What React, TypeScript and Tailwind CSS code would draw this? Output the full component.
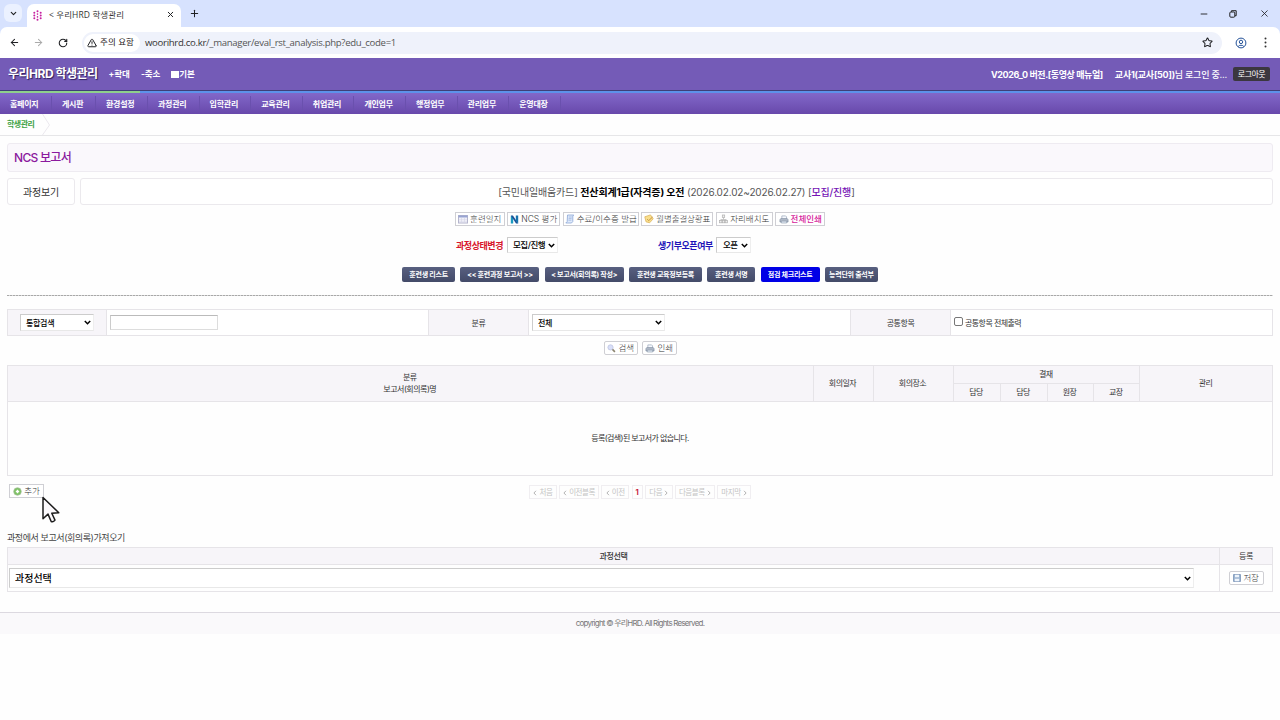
import type { ReactNode } from "react";
import { ArrowLeft, ArrowRight, ChevronDown, Minus, Plus, RotateCw, Star, TriangleAlert, X } from "lucide-react";
import clsx from "clsx";

const menus = [
  { label: "홈페이지", width: "w-[52px]" },
  { label: "게시판", width: "w-[44px]" },
  { label: "환경설정", width: "w-[52px]" },
  { label: "과정관리", width: "w-[51.6px]" },
  { label: "입학관리", width: "w-[51.6px]" },
  { label: "교육관리", width: "w-[51.6px]" },
  { label: "취업관리", width: "w-[51.6px]" },
  { label: "개인업무", width: "w-[51.6px]" },
  { label: "행정업무", width: "w-[51.6px]" },
  { label: "관리업무", width: "w-[51.6px]" },
  { label: "운영대장", width: "w-[51.6px]" },
];

const actions = [
  { label: "훈련생 리스트", width: "w-[53px]" },
  { label: "<< 훈련과정 보고서 >>", width: "w-[79px]" },
  { label: "< 보고서(회의록) 작성>", width: "w-[79px]" },
  { label: "훈련생 교육정보등록", width: "w-[73px]" },
  { label: "훈련생 서명", width: "w-[48px]" },
  { label: "점검 체크리스트", width: "w-[59px]", active: true },
  { label: "능력단위 출석부", width: "w-[53px]" },
];

const pages = [
  { label: "처음", width: "w-[28px]", dir: "prev" },
  { label: "이전블록", width: "w-[40px]", dir: "prev" },
  { label: "이전", width: "w-[28px]", dir: "prev" },
  { label: "1", width: "w-[11px]" },
  { label: "다음", width: "w-[28px]", dir: "next" },
  { label: "다음블록", width: "w-[40px]", dir: "next" },
  { label: "마지막", width: "w-[34px]", dir: "next" },
];

function CalendarIcon() {
  return (
    <svg width="10" height="10" viewBox="0 0 10 10" className="shrink-0">
      <rect x=".5" y="1.5" width="9" height="7.5" fill="#f4f4fb" stroke="#b4b4cc" />
      <path d="M.5 1.5h9v2h-9z" fill="#98a4d2" />
      <path d="M1 5.3h8M1 7.2h8M3.5 4v5M6.5 4v5" stroke="#d3d3e6" strokeWidth=".6" />
    </svg>
  );
}

function NcsIcon() {
  return (
    <svg width="9" height="9" viewBox="0 0 9 9" className="shrink-0">
      <path d="M.8 8.5V.8l2.4 1v6.7z" fill="#1a9ac0" />
      <path d="M.8.5h2.1l5.3 8H6z" fill="#1d4f96" />
      <path d="M5.8.5h2.4v8L5.8 6z" fill="#1672ad" />
    </svg>
  );
}

function ScrollIcon() {
  return (
    <svg width="10" height="10" viewBox="0 0 10 10" className="shrink-0">
      <path d="M2.5 1h6.3l-1 1v5.5L6.5 9H.8l1.4-1.5z" fill="#dfeafb" stroke="#8aa6d6" strokeWidth=".8" />
      <path d="M3.8 3h3M3.6 4.6h3M3.4 6.2h3" stroke="#8aa6d6" strokeWidth=".6" />
    </svg>
  );
}

function NoteIcon() {
  return (
    <svg width="10" height="10" viewBox="0 0 10 10" className="shrink-0">
      <path d="M.8 2.8 6.5.9l2.7 3.9-3.6 4-3.6-1z" fill="#f9df8c" stroke="#dcb45e" strokeWidth=".8" />
      <path d="m3.2 5.2 1.5 1.4L8.6 3" fill="none" stroke="#c08c40" strokeWidth=".9" />
    </svg>
  );
}

function SeatIcon() {
  return (
    <svg width="9" height="10" viewBox="0 0 9 10" className="shrink-0">
      <path d="M4.5 3.5v2M1.8 7V5.5h5.4V7" fill="none" stroke="#bbb" strokeWidth=".8" />
      <g fill="#eee" stroke="#b0b0b0" strokeWidth=".7">
        <rect x="3.3" y="1" width="2.4" height="2.6" />
        <rect x=".6" y="6.5" width="2.3" height="2.3" />
        <rect x="3.4" y="6.5" width="2.3" height="2.3" />
        <rect x="6.2" y="6.5" width="2.3" height="2.3" />
      </g>
    </svg>
  );
}

function PrinterIcon() {
  return (
    <svg width="10" height="9" viewBox="0 0 10 10" className="shrink-0">
      <path d="M2.6 4V1h4.2l1 1v2" fill="#f5f8fd" stroke="#8f9db2" strokeWidth=".7" />
      <path d="M1.4 4h7.2l.9 1.2v2.6H.5V5.2z" fill="#b1bac8" stroke="#7b899d" strokeWidth=".7" />
      <path d="M2 6.8h6v2.1H2z" fill="#e6eef9" stroke="#7b899d" strokeWidth=".6" />
    </svg>
  );
}

function SearchIcon() {
  return (
    <svg width="9" height="9" viewBox="0 0 9 9" className="shrink-0">
      <circle cx="3.5" cy="3.4" r="2.6" fill="#d9dff8" stroke="#c3c8e4" strokeWidth=".9" />
      <path d="m5.5 5.4 2.4 2.5" stroke="#8c8570" strokeWidth="1.6" />
    </svg>
  );
}

function AddIcon() {
  return (
    <svg width="9" height="9" viewBox="0 0 9 9" className="shrink-0">
      <circle cx="4.5" cy="4.5" r="3.8" fill="#7cc162" stroke="#a7bf9e" strokeWidth=".7" />
      <path d="M4.5 2.8v3.4M2.8 4.5h3.4" stroke="#fff" strokeWidth="1.4" />
    </svg>
  );
}

function SaveIcon() {
  return (
    <svg width="8" height="8" viewBox="0 0 8 8" className="shrink-0">
      <rect x=".6" y=".6" width="6.8" height="6.8" fill="#9db5d2" stroke="#7792b6" strokeWidth=".8" />
      <path d="M2 .8h4v2.4H2zM1.8 4.8h4.4v2.4H1.8z" fill="#eef4fb" />
    </svg>
  );
}

function IconButton({ icon, className, children }: { icon: ReactNode; className: string; children: ReactNode }) {
  return (
    <button
      className={clsx(
        "flex h-[14px] items-center justify-center gap-[2px] whitespace-nowrap border border-[#cfcfd4] bg-white text-[8.5px] leading-none font-light text-[#333]",
        className,
      )}
    >
      {icon}
      <span>{children}</span>
    </button>
  );
}

function SelectBox({ className, children }: { className: string; children: ReactNode }) {
  return (
    <div
      className={clsx(
        "flex items-center justify-between border border-t-[#ccc] border-r-[#eee] border-b-[#e8e8e8] border-l-[#ccc] bg-white leading-none whitespace-nowrap text-black",
        className,
      )}
    >
      <span>{children}</span>
      <svg width="7" height="5" viewBox="0 0 7 5" className="shrink-0">
        <path d="m.8 1 2.7 2.7L6.2 1" fill="none" stroke="#000" strokeWidth="1.5" />
      </svg>
    </div>
  );
}

function BrowserBar() {
  return (
    <div className="h-[58px] bg-[#d7e2fe] font-['Open_Sans','Noto_Sans_CJK_KR',sans-serif] text-[#1f2023]">
      <div className="flex h-[27px] items-end">
        <div className="mb-[5px] ml-1 flex h-[18px] w-[18px] items-center justify-center rounded-md bg-[#ebf1ff]">
          <ChevronDown size={9} strokeWidth={3} />
        </div>
        <div className="ml-[5px] flex h-[23px] w-[154px] items-center rounded-t-[7px] bg-white pl-[6px]">
          <svg width="9" height="11" viewBox="0 0 9 11" fill="#c61fa0">
            <circle cx="4.5" cy="1.3" r="1" />
            <circle cx="4.5" cy="9.7" r="1" />
            <circle cx="1.3" cy="2.7" r="1" />
            <circle cx="7.7" cy="2.7" r="1" />
            <circle cx="1.3" cy="5.5" r="1" />
            <circle cx="7.7" cy="5.5" r="1" />
            <circle cx="1.3" cy="8.3" r="1" />
            <circle cx="7.7" cy="8.3" r="1" />
            <circle cx="4.5" cy="4.1" r=".8" />
            <circle cx="4.5" cy="6.9" r=".8" />
          </svg>
          <span className="ml-[7px] text-[8.5px] leading-none tracking-[0.1px] whitespace-nowrap text-[#333]">&lt; 우리HRD 학생관리</span>
          <X size={9} strokeWidth={2.6} className="mr-[6px] mb-[3px] ml-auto" />
        </div>
        <Plus size={11} strokeWidth={2.2} className="mb-[8px] ml-[8px]" />
        <div className="mb-[8px] ml-auto flex items-center">
          <Minus size={10} strokeWidth={2.2} className="mr-[20px]" />
          <svg width="8" height="8" viewBox="0 0 8 8" fill="none" stroke="#222" className="mr-[22px]">
            <rect x=".8" y="2" width="5" height="5.2" rx="1" />
            <path d="M2.5 1.8V.7h4.7v5H6" />
          </svg>
          <X size={11} strokeWidth={1.8} className="mr-[10px]" />
        </div>
      </div>
      <div className="flex h-[31px] items-center rounded-t-[7px] bg-white">
        <ArrowLeft size={11} strokeWidth={2.2} className="ml-[9px]" />
        <ArrowRight size={11} strokeWidth={2.2} className="ml-[13px] text-[#aaa]" />
        <RotateCw size={10} strokeWidth={2.6} className="ml-[14px]" />
        <div className="ml-[14px] flex h-[22px] w-[1140px] items-center rounded-full bg-[#eff2fb] pr-[9px] pl-[2px]">
          <div className="flex h-[18px] w-[56px] items-center gap-[3px] rounded-full bg-white pl-[3px] text-[8.5px] leading-none tracking-[0.1px] whitespace-nowrap">
            <TriangleAlert size={10} strokeWidth={2.4} />
            주의 요함
          </div>
          <span className="ml-[5px] text-[9.6px] leading-none tracking-[-0.31px] whitespace-nowrap text-[#333]">
            woorihrd.co.kr<span className="text-[#555]">/_manager/eval_rst_analysis.php?edu_code=1</span>
          </span>
          <Star size={11} strokeWidth={2.2} className="ml-auto" />
        </div>
        <svg width="12" height="12" viewBox="0 0 12 12" fill="none" stroke="#245299" className="ml-[13px]">
          <circle cx="6" cy="6" r="4.9" />
          <circle cx="6" cy="4.9" r="1.7" />
          <path d="M3.2 9.5C4 7.8 8 7.8 8.8 9.5" />
        </svg>
        <svg width="3" height="11" viewBox="0 0 3 11" fill="#333" className="ml-[17px]">
          <circle cx="1.5" cy="1.5" r="1" />
          <circle cx="1.5" cy="5.5" r="1" />
          <circle cx="1.5" cy="9.5" r="1" />
        </svg>
      </div>
    </div>
  );
}

function Header() {
  return (
    <header className="text-white">
      <div className="flex h-[32px] items-center bg-[#6f56b5] bg-[radial-gradient(rgba(255,255,255,0.1)_0.5px,transparent_0.8px)] bg-[size:2px_2px] pr-[10px] pl-2 whitespace-nowrap">
        <h1 className="text-[12px] leading-none font-bold tracking-[-0.5px] [text-shadow:1px_1px_1px_#30205c]">우리HRD 학생관리</h1>
        <div className="ml-[11px] flex gap-[11px] text-[8.5px] leading-none font-bold tracking-[-0.05px]">
          <span>+확대</span>
          <span>-축소</span>
          <span className="flex items-center">
            <i className="h-[7px] w-[8px] bg-white" />
            기본
          </span>
        </div>
        <div className="ml-auto flex items-center text-[9px] leading-none tracking-[-0.4px]">
          <b>V2026_0 버전.[동영상 매뉴얼]</b>
          <span className="ml-[12px] font-medium tracking-[-0.22px]">
            <b>교사1(교사[50])</b>님 로그인 중...
          </span>
          <button className="ml-[6px] h-[14px] w-[37px] rounded-[2px] bg-[#3b373f] text-[8px] leading-none tracking-[-0.5px]">로그아웃</button>
        </div>
      </div>
      <div className="h-px bg-[#3f3f78]" />
      <div className="flex h-[2px] bg-[#5d92ea]">
        <div className="w-[140px] bg-[#8fd08c]" />
      </div>
      <nav className="flex h-[21px] items-center bg-gradient-to-b from-[#8268c9] to-[#6848ab]">
        {menus.map((menu) => (
          <span
            key={menu.label}
            className={clsx(
              "flex h-[15px] shrink-0 items-center justify-start border-r border-[#6a50ae] pl-[10px] text-[8px] leading-none font-bold tracking-[-0.25px] whitespace-nowrap",
              menu.width,
            )}
          >
            {menu.label}
          </span>
        ))}
      </nav>
    </header>
  );
}

function CourseTools() {
  return (
    <>
      <div className="mt-[7px] flex justify-center gap-[2.5px]">
        <IconButton icon={<CalendarIcon />} className="w-[50px]">훈련일지</IconButton>
        <IconButton icon={<NcsIcon />} className="w-[53px]">NCS 평가</IconButton>
        <IconButton icon={<ScrollIcon />} className="w-[76px]">수료/이수증 발급</IconButton>
        <IconButton icon={<NoteIcon />} className="w-[72px] tracking-[-0.1px]">월별출결상황표</IconButton>
        <IconButton icon={<SeatIcon />} className="w-[57px]">자리배치도</IconButton>
        <IconButton icon={<PrinterIcon />} className="w-[50px]">
          <span className="font-medium text-[#d6249c]">전체인쇄</span>
        </IconButton>
      </div>
      <div className="mt-[11px] flex h-4 items-center pl-[449px] text-[9px] leading-none font-bold tracking-[-0.45px]">
        <span className="w-[51px] whitespace-nowrap text-[#d8152b]">과정상태변경</span>
        <SelectBox className="h-4 w-[51px] pr-[2px] pl-[5px] text-[8.5px] font-medium">모집/진행</SelectBox>
        <span className="ml-[100px] w-[58px] whitespace-nowrap text-[#1d12b8]">생기부오픈여부</span>
        <SelectBox className="h-4 w-[35px] pr-[2px] pl-[6px] text-[8.5px] font-medium">오픈</SelectBox>
      </div>
      <div className="mt-[14px] flex justify-center gap-[5.3px]">
        {actions.map((action) => (
          <button
            key={action.label}
            className={clsx(
              "h-[15px] rounded-[2px] text-[7px] leading-none font-bold tracking-[-0.25px] whitespace-nowrap text-white",
              action.width,
              action.active ? "bg-[#0000e6]" : "bg-gradient-to-b from-[#586080] to-[#434a68]",
            )}
          >
            {action.label}
          </button>
        ))}
      </div>
    </>
  );
}

function SearchForm() {
  return (
    <>
      <div className="mt-[13px] flex h-[27px] border border-[#e6e4e8] bg-white text-[8px] leading-none tracking-[-0.45px]">
        <div className="flex w-[99px] items-center border-r border-[#e6e4e8] bg-[#f7f5f9] pl-3">
          <SelectBox className="h-[17px] w-[74px] pr-[2px] pl-[5px] font-medium tracking-[-0.3px]">통합검색</SelectBox>
        </div>
        <div className="flex w-[321px] items-center pl-[3px]">
          <input className="h-[15px] w-[108px] border border-[#ddd] border-t-[#bbb] border-l-[#ccc]" />
        </div>
        <div className="flex w-[101px] items-center justify-center border-x border-[#e6e4e8] bg-[#f7f5f9]">분류</div>
        <div className="flex w-[321px] items-center pl-[3px]">
          <SelectBox className="h-[17px] w-[133px] pr-[2px] pl-[5px] font-medium">전체</SelectBox>
        </div>
        <div className="flex w-[101px] items-center justify-center border-x border-[#e6e4e8] bg-[#f7f5f9]">공통항목</div>
        <label className="flex items-center gap-[2px] pl-[3px] tracking-[-0.55px]">
          <i className="mb-[2px] h-[9px] w-[9px] rounded-[2px] border border-[#777] bg-white" />
          공통항목 전체출력
        </label>
      </div>
      <div className="mt-[5px] flex justify-center gap-[4px]">
        <IconButton icon={<SearchIcon />} className="w-[34.5px] rounded-[2px]">검색</IconButton>
        <IconButton icon={<PrinterIcon />} className="w-[34.5px] rounded-[2px]">인쇄</IconButton>
      </div>
    </>
  );
}

function ReportTable() {
  return (
    <table className="mt-[10px] w-full table-fixed border-collapse text-center text-[8px] leading-[12px] tracking-[-0.5px] [&_td]:border [&_td]:border-[#e6e4e8] [&_td]:p-0 [&_td]:pb-[2px] [&_th]:border [&_th]:border-[#e6e4e8] [&_th]:p-0 [&_th]:pr-px [&_th]:pb-[2px] [&_th]:font-normal">
      <colgroup>
        <col className="w-[805.5px]" />
        <col className="w-[60px]" />
        <col className="w-[80px]" />
        <col className="w-[47px]" />
        <col className="w-[47px]" />
        <col className="w-[46px]" />
        <col className="w-[46.5px]" />
        <col />
      </colgroup>
      <thead className="bg-[#f7f5f9]">
        <tr className="h-[18px]">
          <th rowSpan={2}>
            분류
            <br />
            보고서(회의록)명
          </th>
          <th rowSpan={2}>회의일자</th>
          <th rowSpan={2}>회의장소</th>
          <th colSpan={4}>결재</th>
          <th rowSpan={2}>관리</th>
        </tr>
        <tr className="h-[18px]">
          <th>담당</th>
          <th>담당</th>
          <th>원장</th>
          <th>교장</th>
        </tr>
      </thead>
      <tbody>
        <tr className="h-[74px]">
          <td colSpan={8} className="tracking-[-0.6px]">등록(검색)된 보고서가 없습니다.</td>
        </tr>
      </tbody>
    </table>
  );
}

function Pagination() {
  return (
    <div className="mr-[2px] flex h-[16px] items-center gap-[2.2px] text-[7.5px] leading-none tracking-[-0.4px] text-[#c4c4c4]">
      {pages.map((page) => (
        <span
          key={page.label}
          className={clsx(
            "flex h-[14px] items-center justify-center gap-[2px] border border-[#f0eef1] pt-px whitespace-nowrap",
            page.width,
            !page.dir && "font-bold text-[#c8203c]",
          )}
        >
          {page.dir === "prev" && <Chevron d="M3 .8.9 3 3 5.2" />}
          {page.label}
          {page.dir === "next" && <Chevron d="M1 .8 3.1 3 1 5.2" />}
        </span>
      ))}
    </div>
  );
}

function Chevron({ d }: { d: string }) {
  return (
    <svg width="4" height="6" viewBox="0 0 4 6" fill="none" stroke="#aaa" strokeWidth=".9">
      <path d={d} />
    </svg>
  );
}

function CourseImport() {
  return (
    <>
      <p className="mt-[34px] h-[15px] text-[9px] leading-[12px] tracking-[-0.42px] text-[#444]">과정에서 보고서(회의록)가져오기</p>
      <div className="grid h-[45px] grid-cols-[1212px_1fr] grid-rows-[17px_1fr] border border-[#e6e4e8] text-[8px] leading-none tracking-[-0.3px]">
        <div className="flex items-center justify-center border-r border-b border-[#e6e4e8] bg-[#f7f5f9] font-medium">과정선택</div>
        <div className="flex items-center justify-center border-b border-[#e6e4e8] bg-[#f7f5f9]">등록</div>
        <div className="flex items-center border-r border-[#e6e4e8] pl-px">
          <SelectBox className="h-[20px] w-[1185px] pr-[2px] pl-[5px] text-[10px] font-medium tracking-[0px]">과정선택</SelectBox>
        </div>
        <div className="flex items-center justify-center">
          <IconButton icon={<SaveIcon />} className="w-[35px] rounded-[2px]">저장</IconButton>
        </div>
      </div>
    </>
  );
}

export default function App() {
  return (
    <div className="relative h-[720px] w-[1280px] overflow-hidden bg-[#fefefe] font-['Inter','Noto_Sans_CJK_KR',sans-serif] text-[#333]">
      <BrowserBar />
      <Header />
      <div className="flex h-[22px] border-b border-[#e6e6e8] pl-[7px] text-[8px] leading-[20px] font-bold tracking-[-0.5px] text-[#3da244]">
        학생관리
        <svg width="9" height="21" viewBox="0 0 9 21" fill="none" stroke="#ebe8ee" className="ml-[8px]">
          <path d="M.5 0 7.5 11 .5 21" />
        </svg>
      </div>

      <main className="px-[7px] pt-[7px]">
        <h2 className="flex h-[29px] items-center rounded-[3px] border border-[#eeebf1] bg-[#faf8fc] pl-[6px] text-[12px] leading-none font-medium tracking-[-0.7px] text-[#8b1a9e]">
          NCS 보고서
        </h2>
        <div className="mt-[6px] flex h-[27px] gap-[5px] text-[10px] leading-none whitespace-nowrap">
          <div className="flex w-[68px] items-center justify-center rounded-[3px] border border-[#ebe9ed] bg-white tracking-[-0.2px]">과정보기</div>
          <div className="flex flex-1 items-center justify-center rounded-[3px] border border-[#ebe9ed] bg-white tracking-[-0.16px]">
            <p className="text-[#555]">
              [국민내일배움카드] <b className="text-black">전산회계1급(자격증) 오전</b> (2026.02.02~2026.02.27) [
              <b className="font-medium text-[#7413b5]">모집/진행</b>]
            </p>
          </div>
        </div>
        <CourseTools />
        <div className="mt-[13px] h-px bg-[repeating-linear-gradient(90deg,#a8a8a8_0_2px,#d8d8d8_2px_3px)]" />
        <SearchForm />
        <ReportTable />
        <div className="mt-[8px] grid h-[14px] grid-cols-[1fr_auto_1fr] pl-[2px]">
          <IconButton icon={<AddIcon />} className="w-[35px]">추가</IconButton>
          <Pagination />
        </div>
        <CourseImport />
      </main>

      <footer className="mt-[20px] h-[22px] border-t border-[#dcd9e0] bg-[#faf9fb] text-center text-[8px] leading-[21px] tracking-[-0.78px] text-[#777]">
        copyright © 우리HRD. All Rights Reserved.
      </footer>

      {/* Mouse pointer */}
      <svg width="20" height="28" viewBox="0 0 20 28" className="absolute top-[496px] left-[41px]">
        <path
          d="M2 1.5v21.2l5-4.6 3.2 7.4q1.9 1 3.8-1.4l-3.2-6.8 7-.6z"
          fill="#fbf9fc"
          stroke="#1c1c1c"
          strokeWidth="1.5"
          strokeLinejoin="round"
        />
      </svg>
    </div>
  );
}
